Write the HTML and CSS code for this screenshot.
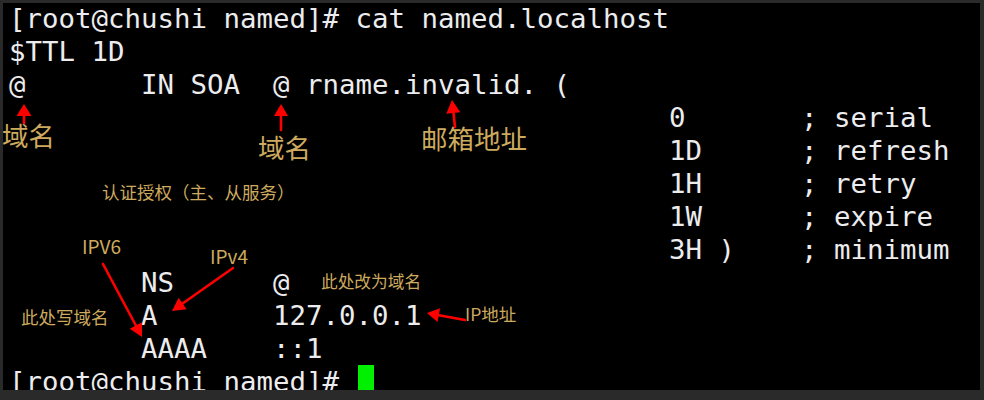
FILE: index.html
```html
<!DOCTYPE html>
<html lang="zh-CN">
<head>
<meta charset="utf-8">
<title>named.localhost</title>
<link rel="stylesheet" href="styles.css">
</head>
<body>
<div class="screen">
  <div class="term">
<pre class="out">[root@chushi named]# cat named.localhost
$TTL 1D
@       IN SOA  @ rname.invalid. (
                                        0       ; serial
                                        1D      ; refresh
                                        1H      ; retry
                                        1W      ; expire
                                        3H )    ; minimum
        NS      @
        A       127.0.0.1
        AAAA    ::1
[root@chushi named]# <span class="cursor"></span></pre>
  </div>

  <span class="note big n-domain1">域名</span>
  <span class="note big n-domain2">域名</span>
  <span class="note big n-mail">邮箱地址</span>
  <span class="note small n-auth">认证授权（主、从服务）</span>
  <span class="note latin n-ipv6">IPV6</span>
  <span class="note latin n-ipv4">IPv4</span>
  <span class="note small n-write">此处写域名</span>
  <span class="note small n-change">此处改为域名</span>
  <span class="note small n-ip">IP地址</span>

  <svg class="arrows" width="984" height="400" viewBox="0 0 984 400">
    <g stroke="#ff0000" stroke-width="2.6" fill="none" stroke-linecap="round">
      <line x1="24" y1="123" x2="24" y2="114"/>
      <line x1="281" y1="130" x2="281" y2="114"/>
      <line x1="455" y1="127" x2="453.3" y2="111"/>
      <line x1="233" y1="268" x2="182.6" y2="303.5"/>
      <line x1="103" y1="264" x2="135.9" y2="325.5"/>
      <line x1="465" y1="320" x2="438.8" y2="315.2"/>
    </g>
    <g fill="#ff0000">
      <polygon points="24,104 31.5,116 16.5,116"/>
      <polygon points="281,104 288,116 274,116"/>
      <polygon points="452,100 460.3,112.2 446.3,113.8"/>
      <polygon points="172,311 186.6,309.2 178.6,297.8"/>
      <polygon points="142,337 129.7,328.8 142.1,322.2"/>
      <polygon points="427,313 440.1,308.3 437.5,322.1"/>
    </g>
  </svg>
</div>
</body>
</html>
```

FILE: styles.css
```css
html, body {
  margin: 0;
  padding: 0;
  background: #2a2a2a;
}

.screen {
  position: relative;
  width: 984px;
  height: 400px;
  box-sizing: border-box;
  padding: 3px 4px 10px 3px;
  background: #2a2a2a;
  overflow: hidden;
}

.term {
  height: 100%;
  background: #000;
  overflow: hidden;
}

.out {
  margin: -1px 0 0 0;
  padding: 0 0 0 6px;
  font-family: "DejaVu Sans Mono", "Liberation Mono", monospace;
  font-size: 27.42px;
  line-height: 33px;
  color: #ececee;
  white-space: pre;
}

.cursor {
  display: inline-block;
  width: 16px;
  height: 33px;
  margin-left: 2px;
  vertical-align: top;
  background: #00f000;
}

.note {
  position: absolute;
  line-height: 1;
  white-space: nowrap;
  color: #cdaa5e;
  font-family: "Noto Sans CJK SC", "Noto Sans", sans-serif;
}

.big { font-size: 26.5px; }
.small { font-size: 17.5px; }
.latin { font-size: 19px; }

.n-domain1 { left: 2px; top: 122px; }
.n-domain2 { left: 258px; top: 134px; }
.n-mail { left: 421px; top: 125px; }
.n-auth { left: 102px; top: 183px; }
.n-ipv6 { left: 82px; top: 236px; }
.n-ipv4 { left: 210px; top: 246px; }
.n-write { left: 21px; top: 308px; }
.n-change { left: 321px; top: 273px; font-size: 16.7px; }
.n-ip { left: 465px; top: 305px; }

.arrows {
  position: absolute;
  left: 0;
  top: 0;
  pointer-events: none;
}
```
